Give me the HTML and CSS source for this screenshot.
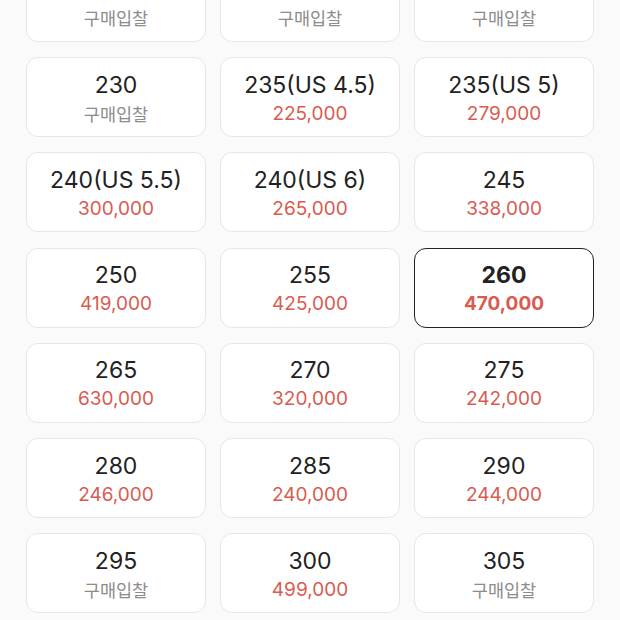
FILE: index.html
```html
<!DOCTYPE html>
<html lang="ko">
<head>
  <meta charset="UTF-8">
  <meta name="viewport" content="width=device-width, initial-scale=1.0">
  <title>사이즈 선택</title>
  <link rel="stylesheet" href="styles.css">
</head>
<body>

  <div class="size-grid">
    <div class="size-box"><span class="size">215</span><span class="price empty">구매입찰</span></div>
    <div class="size-box"><span class="size">220</span><span class="price empty">구매입찰</span></div>
    <div class="size-box"><span class="size">225</span><span class="price empty">구매입찰</span></div>

    <div class="size-box"><span class="size">230</span><span class="price empty">구매입찰</span></div>
    <div class="size-box"><span class="size">235(US 4.5)</span><span class="price">225,000</span></div>
    <div class="size-box"><span class="size">235(US 5)</span><span class="price">279,000</span></div>

    <div class="size-box"><span class="size">240(US 5.5)</span><span class="price">300,000</span></div>
    <div class="size-box"><span class="size">240(US 6)</span><span class="price">265,000</span></div>
    <div class="size-box"><span class="size">245</span><span class="price">338,000</span></div>

    <div class="size-box"><span class="size">250</span><span class="price">419,000</span></div>
    <div class="size-box"><span class="size">255</span><span class="price">425,000</span></div>
    <div class="size-box selected"><span class="size">260</span><span class="price">470,000</span></div>

    <div class="size-box"><span class="size">265</span><span class="price">630,000</span></div>
    <div class="size-box"><span class="size">270</span><span class="price">320,000</span></div>
    <div class="size-box"><span class="size">275</span><span class="price">242,000</span></div>

    <div class="size-box"><span class="size">280</span><span class="price">246,000</span></div>
    <div class="size-box"><span class="size">285</span><span class="price">240,000</span></div>
    <div class="size-box"><span class="size">290</span><span class="price">244,000</span></div>

    <div class="size-box"><span class="size">295</span><span class="price empty">구매입찰</span></div>
    <div class="size-box"><span class="size">300</span><span class="price">499,000</span></div>
    <div class="size-box"><span class="size">305</span><span class="price empty">구매입찰</span></div>
  </div>

</body>
</html>
```

FILE: styles.css
```css
body {
  font-family: Inter, "Noto Sans CJK KR", sans-serif;
  background-color: #fafafa;
  color: #222;
  margin: 0;
  padding: 0;
  overflow: hidden;
}

.size-grid {
  display: grid;
  grid-template-columns: repeat(3, 180px);
  grid-auto-rows: 80px;
  column-gap: 14px;
  row-gap: 15.3px;
  margin-top: -38.3px;
  padding-left: 26px;
}

.size-box {
  background-color: #fff;
  border: 1px solid #e6e6e6;
  border-radius: 12px;
  display: flex;
  flex-direction: column;
  align-items: center;
  justify-content: center;
  padding-top: 4px;
  box-sizing: border-box;
}

.size-box .size {
  font-size: 23px;
  line-height: 28px;
  color: #222;
}

.size-box .price {
  font-size: 19px;
  line-height: 28px;
  margin-top: 1px;
  color: #d95b4f;
}

.size-box .price.empty {
  color: #8c8c8c;
  font-family: "Noto Sans CJK KR", sans-serif;
  font-size: 17.5px;
}

.size-box.selected {
  border: 1.5px solid #222;
}

.size-box.selected .size,
.size-box.selected .price {
  font-weight: bold;
}
```
